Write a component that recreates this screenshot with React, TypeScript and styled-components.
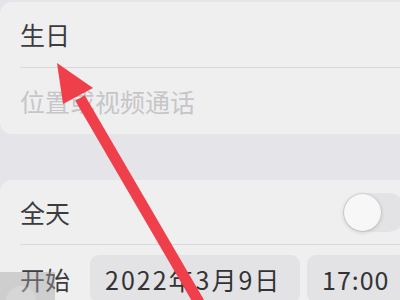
import styled, { createGlobalStyle } from "styled-components";

const GlobalStyle = createGlobalStyle`
  html, body {
    margin: 0;
    padding: 0;
    background: #e5e4e9;
  }
  body {
    font-family: "Noto Sans CJK SC", "Noto Sans", sans-serif;
  }
`;

const Screen = styled.div`
  position: relative;
  width: 400px;
  height: 300px;
  overflow: hidden;
  background: #e5e4e9;
  padding-top: 2px;
  box-sizing: border-box;
`;

const Card = styled.div<{ $gap?: number }>`
  width: 412px;
  margin-top: ${(p) => p.$gap ?? 0}px;
  background: #efeff0;
  border-radius: 12px;
  overflow: hidden;
`;

const Row = styled.div<{ $height: number; $divider?: boolean; $top?: boolean }>`
  display: flex;
  align-items: ${(p) => (p.$top ? "flex-start" : "center")};
  height: ${(p) => p.$height}px;
  margin-left: 20px;
  padding-right: 5px;
  border-bottom: ${(p) => (p.$divider ? "1px solid #d9d9dc" : "none")};
  box-sizing: border-box;
`;

const Label = styled.span<{ $muted?: boolean }>`
  font-size: 25px;
  line-height: 1;
  color: ${(p) => (p.$muted ? "#c6c6c8" : "#3c3c3e")};
`;

const StartLabel = styled(Label)`
  margin-top: 22px;
`;

const Toggle = styled.div`
  margin-left: auto;
  width: 64px;
  height: 39px;
  border-radius: 20px;
  background: #e3e3e6;
  position: relative;
  flex-shrink: 0;
`;

const Knob = styled.div`
  position: absolute;
  left: 1px;
  top: 1px;
  width: 37px;
  height: 37px;
  border-radius: 50%;
  background: #f7f7f7;
  box-shadow: 0 1px 4px rgba(0, 0, 0, 0.18), 0 0 0 0.5px rgba(0, 0, 0, 0.08);
`;

const Pills = styled.div`
  display: flex;
  gap: 7px;
  margin-left: 20px;
  margin-top: 10px;
`;

const Pill = styled.div<{ $width: number; $spacing?: number }>`
  width: ${(p) => p.$width}px;
  height: 48px;
  border-radius: 9px;
  background: #e3e3e6;
  display: flex;
  align-items: center;
  padding-left: 15px;
  box-sizing: border-box;
  font-size: 25px;
  letter-spacing: ${(p) => p.$spacing ?? 0}px;
  color: #333335;
`;

const Thumb = styled.div`
  position: absolute;
  left: 0;
  top: 272px;
  width: 55px;
  height: 28px;
  background: rgba(160, 160, 160, 0.42);
  overflow: hidden;
`;

const ThumbDot = styled.div`
  position: absolute;
  left: 6px;
  top: 14px;
  width: 30px;
  height: 30px;
  border-radius: 50%;
  background: rgba(255, 255, 255, 0.18);
`;

const Arrow = styled.svg`
  position: absolute;
  left: 0;
  top: 0;
  pointer-events: none;
`;

export default function App() {
  return (
    <>
      <GlobalStyle />
      <Screen>
        <Card>
          <Row $height={66} $divider>
            <Label>生日</Label>
          </Row>
          <Row $height={66}>
            <Label $muted>位置或视频通话</Label>
          </Row>
        </Card>
        <Card $gap={46}>
          <Row $height={65} $divider>
            <Label>全天</Label>
            <Toggle>
              <Knob />
            </Toggle>
          </Row>
          <Row $height={70} $top>
            <StartLabel>开始</StartLabel>
            <Pills>
              <Pill $width={210} $spacing={2}>2022年3月9日</Pill>
              <Pill $width={100} $spacing={1}>17:00</Pill>
            </Pills>
          </Row>
        </Card>
        <Thumb>
          <ThumbDot />
        </Thumb>
        <Arrow width="400" height="300" viewBox="0 0 400 300">
          <line x1="80" y1="98" x2="200" y2="304" stroke="#ef3f4a" strokeWidth="11" />
          <polygon points="57,63 93,88 63,104" fill="#ef3f4a" />
        </Arrow>
      </Screen>
    </>
  );
}
